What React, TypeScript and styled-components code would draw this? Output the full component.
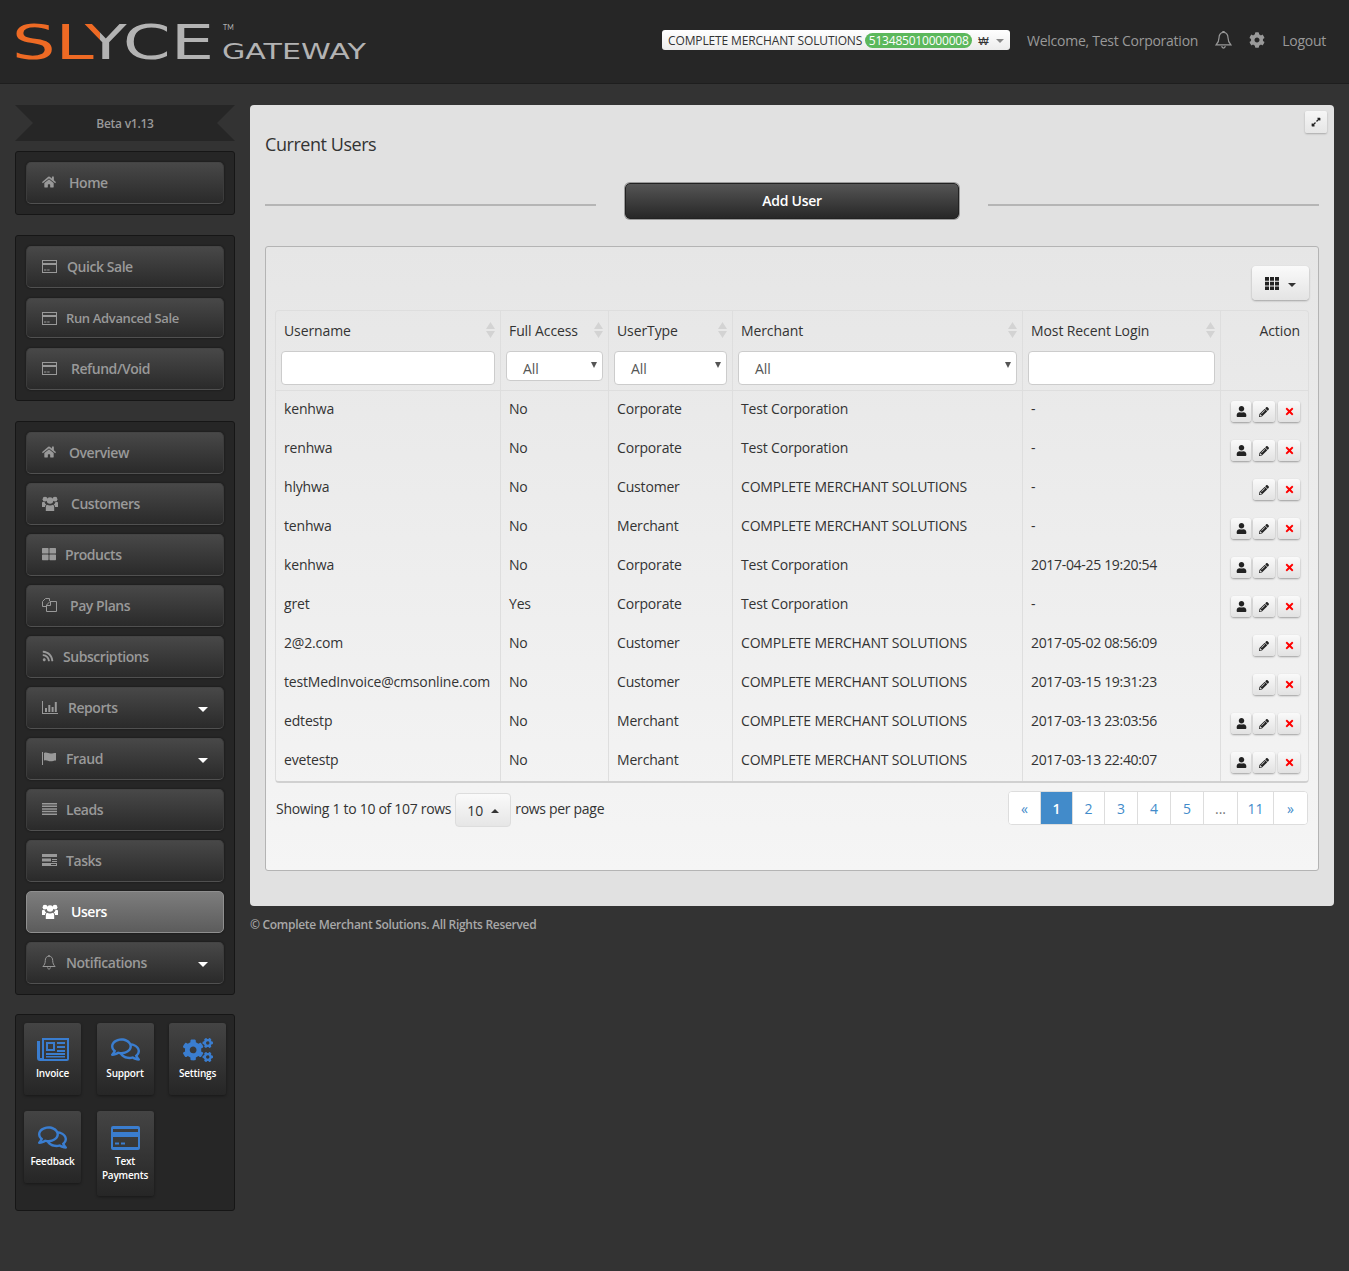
import styled, { createGlobalStyle } from "styled-components";
import type { ReactNode } from "react";
import {
  FaHome,
  FaThLarge,
  FaRss,
  FaCog,
  FaCogs,
  FaRegComments,
  FaUser,
  FaPencilAlt,
  FaTimes,
  FaExpandAlt,
} from "react-icons/fa";

const GlobalStyle = createGlobalStyle`
  html, body {
    margin: 0;
    padding: 0;
    background: #333333;
  }
  body {
    font-family: "Open Sans", "Liberation Sans", sans-serif;
    font-size: 14px;
    color: #333;
  }
`;

// hand drawn icons for the glyphs the packages don't carry
const CardIcon = ({ size = 16 }: { size?: number }) => (
  <svg width={size} height={(size * 13) / 16} viewBox="0 0 16 13" fill="currentColor">
    <path d="M0 0h15v13H0zM1 1v2h13V1zM1 5v7h13V5z" fillRule="evenodd" />
    <path d="M2 9.500h2.400v1H2zM5.200 9.500h2.400v1H5.200z" />
  </svg>
);
const UsersIcon = () => (
  <svg width="16" height="15" viewBox="0 0 16 15" fill="currentColor">
    <circle cx="3" cy="3.200" r="2.400" />
    <circle cx="13" cy="3.200" r="2.400" />
    <circle cx="8" cy="4.500" r="3.200" />
    <path d="M0 6.500c.6-.7 1.600-.8 2.500-.6.300 1.100.9 2 1.800 2.600C3.400 9 3 10 3 11H0zM16 6.500c-.6-.7-1.600-.8-2.500-.6-.3 1.100-.9 2-1.800 2.600.9.500 1.300 1.500 1.300 2.500h3zM5 8.800c1.700 1 4.300 1 6 0 .9.500 1.200 1.500 1.200 2.500V15H3.800v-3.700c0-1 .3-2 1.200-2.500z" />
  </svg>
);
const DuplicateIcon = () => (
  <svg width="15" height="14" viewBox="0 0 15 14" fill="none" stroke="currentColor">
    <path d="M7.500 3V.5H3.500L.5 3.500V8.500H4.500" />
    <path d="M14.500 13.500V3.500H8L4.500 7V13.500z" />
    <path d="M5 7.500h3.500V4" />
  </svg>
);
const StatsIcon = () => (
  <svg width="16" height="13" viewBox="0 0 16 13" fill="currentColor">
    <path d="M0 0h1v12h15v1H0zM3 7h2v4H3zM6.300 4h2v7h-2zM9.600 6h2v5h-2zM12.800 1h2v10h-2z" />
  </svg>
);
const FlagIcon = () => (
  <svg width="15" height="13" viewBox="0 0 15 13" fill="currentColor">
    <path d="M0 0h1v13H0zM2 1c3-1.200 4 .6 6.500.6 2 0 3.500-.6 5.500-.6v7.500c-2 0-3.500.8-5.500.8C6 9.300 5 7.500 2 8.500z" />
  </svg>
);
const ListIcon = () => (
  <svg width="15" height="12" viewBox="0 0 15 12" fill="currentColor">
    <path d="M0 0h15v1.500H0zM0 2.600h15v1.500H0zM0 5.200h15v1.500H0zM0 7.800h15v1.500H0zM0 10.400h15V12H0z" />
  </svg>
);
const TasksIcon = () => (
  <svg width="15" height="12" viewBox="0 0 15 12" fill="currentColor">
    <path d="M0 0h15v3H0zM0 4.500h9v3H0zM10 5h5v1H10zM10 7h5v1H10zM0 9h15v3H0zM9 10h5v1H9z" fillRule="evenodd" />
  </svg>
);
const BellIcon = ({ size = 14 }: { size?: number }) => (
  <svg width={size} height={(size * 15) / 14} viewBox="0 0 14 15" fill="none" stroke="currentColor" strokeWidth="1">
    <path d="M7 1.200c-2.600 0-3.700 2-3.700 4.300 0 3-1 4.500-2.400 6h12.200c-1.400-1.500-2.400-3-2.400-6 0-2.300-1.100-4.300-3.700-4.300z" />
    <path d="M5.500 12.500c.2 1 .8 1.600 1.500 1.600s1.300-.6 1.500-1.600M6.300 1.100c0-1 1.400-1 1.400 0" />
  </svg>
);
const NewspaperIcon = () => (
  <svg width="32" height="23" viewBox="0 0 32 23" fill="currentColor">
    <path
      fillRule="evenodd"
      d="M5 0h27v21a2 2 0 0 1-2 2H3a3 3 0 0 1-3-3V3h3v17h2zM7 2v19h23V2zM9 4h9v9H9zM11 6v5h5V6zM20 4h8v2h-8zM20 8h8v2h-8zM20 12h8v2h-8zM9 15h19v2H9zM9 18h19v1.500H9z"
    />
  </svg>
);
const BigCardIcon = () => (
  <svg width="29" height="24" viewBox="0 0 29 24" fill="currentColor">
    <path
      fillRule="evenodd"
      d="M2 0h25a2 2 0 0 1 2 2v20a2 2 0 0 1-2 2H2a2 2 0 0 1-2-2V2a2 2 0 0 1 2-2zM2 3v3h25V3zM2 11v10h25V11zM4 16.500h4v2H4zM10 16.500h4v2h-4z"
    />
  </svg>
);
const GridIcon = () => (
  <svg width="14" height="13" viewBox="0 0 14 13" fill="currentColor">
    <path d="M0 0h4v3.700H0zM5 0h4v3.700H5zM10 0h4v3.700h-4zM0 4.700h4v3.700H0zM5 4.700h4v3.700H5zM10 4.700h4v3.700h-4zM0 9.400h4V13H0zM5 9.400h4V13H5zM10 9.400h4V13h-4z" />
  </svg>
);
const SortIcon = () => (
  <svg width="9" height="16" viewBox="0 0 9 16" fill="#d3d3d3">
    <path d="M4.500 0L9 7H0zM0 9h9l-4.500 7z" />
  </svg>
);

const Logo = () => (
  <svg width="352" height="50" viewBox="0 0 352 50">
    <defs>
      <linearGradient id="wordFill" gradientUnits="userSpaceOnUse" x1="0" x2="123" y1="0" y2="0">
        <stop offset="0.5" stopColor="#ee6a24" />
        <stop offset="0.5" stopColor="#b3b3b3" />
      </linearGradient>
    </defs>
    <text transform="translate(-3 42) scale(1.43 1)" fill="url(#wordFill)" fontFamily="DejaVu Sans, sans-serif" fontSize="48">
      SLYCE
    </text>
    <text x="208" y="13" fill="#b3b3b3" fontFamily="Lato, sans-serif" fontSize="7">TM</text>
    <text transform="translate(207 42) scale(1.37 1)" fill="#b3b3b3" fontFamily="DejaVu Sans, sans-serif" fontSize="22">GATEWAY</text>
  </svg>
);

type NavEntry = { label: string; icon: ReactNode; indent: number; small?: boolean; caret?: boolean; active?: boolean };

const HOME_NAV: NavEntry[] = [{ label: "Home", icon: <FaHome size={14} />, indent: 11 }];
const SALE_NAV: NavEntry[] = [
  { label: "Quick Sale", icon: <CardIcon />, indent: 9 },
  { label: "Run Advanced Sale", icon: <CardIcon />, indent: 8, small: true },
  { label: "Refund/Void", icon: <CardIcon />, indent: 13 },
];
const MAIN_NAV: NavEntry[] = [
  { label: "Overview", icon: <FaHome size={14} />, indent: 11 },
  { label: "Customers", icon: <UsersIcon />, indent: 13 },
  { label: "Products", icon: <FaThLarge size={14} />, indent: 7 },
  { label: "Pay Plans", icon: <DuplicateIcon />, indent: 12 },
  { label: "Subscriptions", icon: <FaRss size={12} />, indent: 5 },
  { label: "Reports", icon: <StatsIcon />, indent: 10, caret: true },
  { label: "Fraud", icon: <FlagIcon />, indent: 8, caret: true },
  { label: "Leads", icon: <ListIcon />, indent: 8 },
  { label: "Tasks", icon: <TasksIcon />, indent: 8 },
  { label: "Users", icon: <UsersIcon />, indent: 13, active: true },
  { label: "Notifications", icon: <BellIcon />, indent: 8, caret: true },
];

const TILES = [
  { label: "Invoice", icon: <NewspaperIcon /> },
  { label: "Support", icon: <FaRegComments size={29} /> },
  { label: "Settings", icon: <FaCogs size={30} /> },
  { label: "Feedback", icon: <FaRegComments size={29} /> },
  { label: "Text Payments", icon: <BigCardIcon /> },
];

const CMS = "COMPLETE MERCHANT SOLUTIONS";
const TC = "Test Corporation";
const ROWS = [
  { user: "kenhwa", full: "No", type: "Corporate", merchant: TC, login: "-", person: true },
  { user: "renhwa", full: "No", type: "Corporate", merchant: TC, login: "-", person: true },
  { user: "hlyhwa", full: "No", type: "Customer", merchant: CMS, login: "-", person: false },
  { user: "tenhwa", full: "No", type: "Merchant", merchant: CMS, login: "-", person: true },
  { user: "kenhwa", full: "No", type: "Corporate", merchant: TC, login: "2017-04-25 19:20:54", person: true },
  { user: "gret", full: "Yes", type: "Corporate", merchant: TC, login: "-", person: true },
  { user: "2@2.com", full: "No", type: "Customer", merchant: CMS, login: "2017-05-02 08:56:09", person: false },
  { user: "testMedInvoice@cmsonline.com", full: "No", type: "Customer", merchant: CMS, login: "2017-03-15 19:31:23", person: false },
  { user: "edtestp", full: "No", type: "Merchant", merchant: CMS, login: "2017-03-13 23:03:56", person: true },
  { user: "evetestp", full: "No", type: "Merchant", merchant: CMS, login: "2017-03-13 22:40:07", person: true },
];

const COLUMNS = [
  { title: "Username", width: 225, filter: "input" },
  { title: "Full Access", width: 108, filter: "short" },
  { title: "UserType", width: 124, filter: "select" },
  { title: "Merchant", width: 290, filter: "select" },
  { title: "Most Recent Login", width: 198, filter: "input" },
];

const PAGES = [
  { label: "«", width: 32 },
  { label: "1", width: 32, active: true },
  { label: "2", width: 32 },
  { label: "3", width: 33 },
  { label: "4", width: 33 },
  { label: "5", width: 33 },
  { label: "...", width: 34, muted: true },
  { label: "11", width: 36 },
  { label: "»", width: 33 },
];

const NavList = ({ items, $tight }: { items: NavEntry[]; $tight?: boolean }) => (
  <NavGroup $tight={$tight}>
    {items.map((item) => (
      <NavButton key={item.label} $active={item.active} $small={item.small}>
        <NavIcon>{item.icon}</NavIcon>
        <NavLabel $indent={item.indent}>{item.label}</NavLabel>
        {item.caret && <NavCaret />}
      </NavButton>
    ))}
  </NavGroup>
);

const App = () => {
  return (
    <Page>
      <GlobalStyle />
      <TopBar>
        <LogoWrap>
          <Logo />
        </LogoWrap>
        <TopRight>
          <MerchantSelect>
            <MerchantName>{CMS}</MerchantName>
            <MidBadge>513485010000008</MidBadge>
            <Won>₩</Won>
            <SmallCaret />
          </MerchantSelect>
          <Welcome>Welcome, Test Corporation</Welcome>
          <TopIcon $left={17}>
            <BellIcon size={17} />
          </TopIcon>
          <TopIcon $left={17}>
            <FaCog size={16} />
          </TopIcon>
          <Welcome $left={17}>Logout</Welcome>
        </TopRight>
      </TopBar>

      <Body>
        <Sidebar>
          <Ribbon>Beta v1.13</Ribbon>
          <NavList items={HOME_NAV} />
          <NavList items={SALE_NAV} />
          <NavList items={MAIN_NAV} $tight />
          <TileGroup>
            {TILES.map((tile) => (
              <Tile key={tile.label}>
                <TileIcon>{tile.icon}</TileIcon>
                <TileLabel>{tile.label}</TileLabel>
              </Tile>
            ))}
          </TileGroup>
        </Sidebar>

        <Content>
          <Panel>
            <ExpandButton>
              <FaExpandAlt size={10} />
            </ExpandButton>
            <PanelTitle>Current Users</PanelTitle>
            <ActionRow>
              <Rule />
              <AddUser>Add User</AddUser>
              <Rule />
            </ActionRow>
            <TableCard>
              <Toolbar>
                <ColumnsButton>
                  <GridIcon />
                  <DownCaret />
                </ColumnsButton>
              </Toolbar>
              <UsersTable>
                <colgroup>
                  {COLUMNS.map((c) => (
                    <col key={c.title} style={{ width: c.width }} />
                  ))}
                  <col style={{ width: 87 }} />
                </colgroup>
                <thead>
                  <tr>
                    {COLUMNS.map((c) => (
                      <Th key={c.title}>
                        <ThTitle>
                          {c.title}
                          <SortIcon />
                        </ThTitle>
                        {c.filter === "input" ? (
                          <FilterInput />
                        ) : (
                          <FilterSelect $short={c.filter === "short"}>
                            All
                            <SelectArrow />
                          </FilterSelect>
                        )}
                      </Th>
                    ))}
                    <Th>
                      <ActionTitle>Action</ActionTitle>
                    </Th>
                  </tr>
                </thead>
                <tbody>
                  {ROWS.map((row, i) => (
                    <tr key={i}>
                      <Td>{row.user}</Td>
                      <Td>{row.full}</Td>
                      <Td>{row.type}</Td>
                      <Td>{row.merchant}</Td>
                      <Td $tight>{row.login}</Td>
                      <ActionCell>
                        <ActionGroup>
                          {row.person && (
                            <ActionButton $width={20}>
                              <FaUser size={11} />
                            </ActionButton>
                          )}
                          <ActionButton $width={22}>
                            <FaPencilAlt size={10} />
                          </ActionButton>
                          <DeleteButton $width={22}>
                            <FaTimes size={11} />
                          </DeleteButton>
                        </ActionGroup>
                      </ActionCell>
                    </tr>
                  ))}
                </tbody>
              </UsersTable>
              <TableFooter>
                <RowsInfo>
                  <InfoText>Showing 1 to 10 of 107 rows</InfoText>
                  <PageSize>
                    10
                    <UpCaret />
                  </PageSize>
                  <InfoText>rows per page</InfoText>
                </RowsInfo>
                <Pagination>
                  {PAGES.map((p) => (
                    <PageLink key={p.label} $width={p.width} $active={p.active} $muted={p.muted}>
                      {p.label}
                    </PageLink>
                  ))}
                </Pagination>
              </TableFooter>
            </TableCard>
          </Panel>
          <Copyright>© Complete Merchant Solutions. All Rights Reserved</Copyright>
        </Content>
      </Body>
    </Page>
  );
};

const Page = styled.div`
  min-height: 1271px;
  background: #333333;
`;

const TopBar = styled.header`
  height: 84px;
  box-sizing: border-box;
  background: #262626;
  border-bottom: 1px solid #1e1e1e;
  display: flex;
  align-items: center;
  justify-content: space-between;
  padding: 0 23px 0 15px;
`;

const LogoWrap = styled.div`
  display: flex;
  margin-top: 1px;
`;

const TopRight = styled.div`
  display: flex;
  align-items: center;
  margin-top: -3px;
`;

const MerchantSelect = styled.div`
  width: 348px;
  height: 20px;
  box-sizing: border-box;
  background: linear-gradient(#ffffff, #ececec);
  border-radius: 3px;
  display: flex;
  align-items: center;
  padding-left: 6px;
  margin-right: 17px;
  color: #333;
  font-size: 12px;
`;

const MerchantName = styled.span`
  letter-spacing: -0.13px;
  white-space: nowrap;
`;

const MidBadge = styled.span`
  margin-left: 3px;
  width: 107px;
  height: 15px;
  line-height: 15px;
  text-align: center;
  border-radius: 8px;
  background: #5cb85c;
  color: #fff;
  letter-spacing: -0.2px;
`;

const Won = styled.span`
  margin-left: 6px;
  font-size: 11px;
`;

const SmallCaret = styled.span`
  margin-left: 7px;
  margin-top: 2px;
  border-top: 4px solid #888;
  border-left: 4px solid transparent;
  border-right: 4px solid transparent;
`;

const Welcome = styled.span<{ $left?: number }>`
  color: #999;
  font-size: 14px;
  letter-spacing: -0.25px;
  white-space: nowrap;
  margin-left: ${(p) => p.$left ?? 0}px;
`;

const TopIcon = styled.span<{ $left: number }>`
  color: #999;
  display: flex;
  margin-left: ${(p) => p.$left}px;
`;

const Body = styled.div`
  display: flex;
  gap: 15px;
  padding: 21px 15px 60px;
  align-items: flex-start;
`;

const Sidebar = styled.aside`
  width: 220px;
  flex: none;
  display: flex;
  flex-direction: column;
`;

const Ribbon = styled.div`
  height: 36px;
  line-height: 37px;
  margin-bottom: 10px;
  text-align: center;
  background: #262626;
  color: #999;
  font-size: 12px;
  font-weight: 600;
  letter-spacing: -0.25px;
  clip-path: polygon(0 0, 100% 0, calc(100% - 18px) 50%, 100% 100%, 0 100%, 18px 50%);
`;

const NavGroup = styled.nav<{ $tight?: boolean }>`
  background: #262626;
  border: 1px solid #161616;
  border-radius: 3px;
  padding: 10px;
  margin-bottom: ${(p) => (p.$tight ? 19 : 20)}px;
  display: flex;
  flex-direction: column;
  gap: ${(p) => (p.$tight ? 9 : 10)}px;
`;

const NavButton = styled.a<{ $active?: boolean; $small?: boolean }>`
  height: ${(p) => (p.$small ? 40 : 42)}px;
  box-sizing: border-box;
  display: flex;
  align-items: center;
  padding: 0 15px ${(p) => (p.$small ? 0 : 2)}px;
  border-radius: 5px;
  border: 1px solid #3c3c3c;
  border-top-color: #444;
  border-bottom-color: #505050;
  box-shadow: 0 0 2px #111;
  font-weight: 600;
  font-size: ${(p) => (p.$small ? 13 : 14)}px;
  letter-spacing: ${(p) => (p.$small ? -0.35 : -0.45)}px;
  color: ${(p) => (p.$active ? "#fff" : "#999")};
  background: ${(p) =>
    p.$active ? "linear-gradient(#7d7d7d, #5c5c5c)" : "linear-gradient(#484848, #2a2a2a)"};
  ${(p) => p.$active && "border-color: #8f8f8f;"}
`;

const NavIcon = styled.span`
  width: 16px;
  flex: none;
  display: flex;
  align-items: center;
`;

const NavLabel = styled.span<{ $indent: number }>`
  margin-left: ${(p) => p.$indent}px;
  white-space: nowrap;
`;

const NavCaret = styled.span`
  margin-left: auto;
  margin-right: 0;
  margin-top: 5px;
  border-top: 5px solid #fff;
  border-left: 5px solid transparent;
  border-right: 5px solid transparent;
`;

const TileGroup = styled.div`
  background: #262626;
  border: 1px solid #161616;
  border-radius: 3px;
  padding: 8px 8px 14px;
  display: grid;
  grid-template-columns: repeat(3, 57px);
  justify-content: space-between;
  align-items: start;
  row-gap: 16px;
`;

const Tile = styled.a`
  min-height: 72px;
  box-sizing: border-box;
  padding: 14px 2px 14px;
  border-radius: 3px;
  background: linear-gradient(#444444, #262626);
  box-shadow: 0 1px 3px rgba(0, 0, 0, 0.4);
  display: flex;
  flex-direction: column;
  align-items: center;
  text-align: center;
`;

const TileIcon = styled.span`
  height: 25px;
  display: flex;
  align-items: center;
  color: #3a7dcf;
`;

const TileLabel = styled.span`
  margin-top: 4px;
  color: #fff;
  font-size: 10px;
  font-weight: 600;
  letter-spacing: -0.2px;
  line-height: 14px;
`;

const Content = styled.main`
  flex: 1;
  min-width: 0;
`;

const Panel = styled.section`
  position: relative;
  background: #e1e1e1;
  border-radius: 4px;
  padding: 26px 15px 35px;
`;

const ExpandButton = styled.span`
  position: absolute;
  top: 6px;
  right: 7px;
  width: 22px;
  height: 22px;
  box-sizing: border-box;
  display: flex;
  align-items: center;
  justify-content: center;
  color: #222;
  background: linear-gradient(#f6f6f6, #e6e6e6);
  border-radius: 2px;
  box-shadow: 0 1px 2px rgba(0, 0, 0, 0.25);
`;

const PanelTitle = styled.h3`
  margin: 0;
  font-size: 18px;
  font-weight: 400;
  letter-spacing: -0.45px;
  line-height: 27px;
  color: #333;
`;

const ActionRow = styled.div`
  margin-top: 25px;
  display: flex;
  align-items: center;
  gap: 29px;
`;

const Rule = styled.div`
  flex: 1;
  height: 2px;
  margin-top: 8px;
  background: #b5b5b5;
`;

const AddUser = styled.a`
  width: 334px;
  height: 36px;
  box-sizing: border-box;
  padding-bottom: 1px;
  display: flex;
  align-items: center;
  justify-content: center;
  color: #fff;
  font-weight: 600;
  letter-spacing: -0.25px;
  border-radius: 5px;
  border: 1px solid #222;
  background: linear-gradient(#555555, #272727);
  box-shadow: 0 0 0 1px #9a9a9a;
`;

const TableCard = styled.div`
  margin-top: 27px;
  border: 1px solid #b4b4b4;
  border-radius: 3px;
  background: linear-gradient(#e6e6e6, #f5f5f5);
  padding: 19px 9px 43px;
`;

const Toolbar = styled.div`
  display: flex;
  justify-content: flex-end;
  margin-bottom: 10px;
`;

const ColumnsButton = styled.span`
  width: 57px;
  height: 34px;
  box-sizing: border-box;
  display: flex;
  align-items: center;
  justify-content: center;
  gap: 9px;
  color: #222;
  border-radius: 4px;
  background: linear-gradient(#fafafa, #e4e4e4);
  box-shadow: 0 1px 2px rgba(0, 0, 0, 0.3);
`;

const DownCaret = styled.span`
  margin-top: 3px;
  border-top: 4px solid #333;
  border-left: 4px solid transparent;
  border-right: 4px solid transparent;
`;

const UpCaret = styled.span`
  margin-left: 8px;
  margin-top: 2px;
  border-bottom: 4px solid #333;
  border-left: 4px solid transparent;
  border-right: 4px solid transparent;
`;

const UsersTable = styled.table`
  width: 100%;
  table-layout: fixed;
  border-collapse: separate;
  border-spacing: 0;
  border: 1px solid #dedede;
  border-bottom: 2px solid #d0d0d0;
  border-radius: 4px;
`;

const Th = styled.th`
  height: 79px;
  padding: 0 5px;
  vertical-align: top;
  text-align: left;
  font-weight: 400;
  letter-spacing: -0.1px;
  border-right: 1px solid #dedede;
  border-bottom: 1px solid #dedede;
  &:last-child {
    border-right: none;
  }
`;

const ThTitle = styled.div`
  height: 38px;
  padding: 0 0 2px 3px;
  display: flex;
  align-items: center;
  justify-content: space-between;
  color: #333;
`;

const ActionTitle = styled.div`
  height: 40px;
  line-height: 40px;
  padding-right: 3px;
  text-align: right;
  color: #333;
`;

const FilterInput = styled.div`
  height: 34px;
  box-sizing: border-box;
  background: #fff;
  border: 1px solid #ccc;
  border-radius: 4px;
`;

const FilterSelect = styled.div<{ $short?: boolean }>`
  height: ${(p) => (p.$short ? 30 : 34)}px;
  box-sizing: border-box;
  position: relative;
  background: #fff;
  border: 1px solid #ccc;
  border-radius: 4px;
  padding: 7px 16px 0;
  line-height: 20px;
  color: #555;
`;

const SelectArrow = styled.span`
  position: absolute;
  top: 10px;
  right: 5px;
  border-top: 6px solid #555;
  border-left: 3px solid transparent;
  border-right: 3px solid transparent;
`;

const Td = styled.td<{ $tight?: boolean }>`
  height: 39px;
  box-sizing: border-box;
  padding: 8px;
  vertical-align: top;
  line-height: 20px;
  letter-spacing: ${(p) => (p.$tight ? -0.32 : -0.17)}px;
  white-space: nowrap;
  border-right: 1px solid #dedede;
  color: #333;
`;

const ActionCell = styled.td`
  height: 39px;
  box-sizing: border-box;
  padding: 10px 8px 0 0;
  vertical-align: top;
`;

const ActionGroup = styled.div`
  display: flex;
  justify-content: flex-end;
  gap: 2px;
`;

const ActionButton = styled.span<{ $width: number }>`
  width: ${(p) => p.$width}px;
  height: 21px;
  display: flex;
  align-items: center;
  justify-content: center;
  color: #222;
  border-radius: 3px;
  background: linear-gradient(#fafafa, #e2e2e2);
  box-shadow: 0 1px 2px rgba(0, 0, 0, 0.35);
`;

const DeleteButton = styled(ActionButton)`
  color: #f00;
  margin-left: 1px;
`;

const TableFooter = styled.div`
  margin-top: 8px;
  display: flex;
  justify-content: space-between;
  align-items: flex-start;
  padding: 0 1px;
`;

const RowsInfo = styled.div`
  display: flex;
  align-items: flex-start;
  gap: 4px;
  color: #333;
`;

const InfoText = styled.span`
  line-height: 35px;
  letter-spacing: -0.3px;
`;

const PageSize = styled.span`
  width: 56px;
  height: 34px;
  margin-top: 2px;
  box-sizing: border-box;
  display: flex;
  align-items: center;
  justify-content: center;
  border-radius: 4px;
  border: 1px solid #ddd;
  background: linear-gradient(#fafafa, #e6e6e6);
`;

const Pagination = styled.div`
  display: flex;
  height: 34px;
  box-sizing: border-box;
  border: 1px solid #ddd;
  border-radius: 4px;
  background: #fff;
  overflow: hidden;
`;

const PageLink = styled.a<{ $width: number; $active?: boolean; $muted?: boolean }>`
  width: ${(p) => p.$width}px;
  box-sizing: border-box;
  display: flex;
  align-items: center;
  justify-content: center;
  border-right: 1px solid #ddd;
  color: ${(p) => (p.$active ? "#fff" : p.$muted ? "#777" : "#428bca")};
  background: ${(p) => (p.$active ? "#428bca" : "#fff")};
  font-weight: ${(p) => (p.$active ? 600 : 400)};
  &:last-child {
    border-right: none;
  }
`;

const Copyright = styled.div`
  margin-top: 10px;
  font-size: 12px;
  font-weight: 600;
  letter-spacing: -0.3px;
  line-height: 18px;
  color: #a8a8a8;
`;

export default App;
